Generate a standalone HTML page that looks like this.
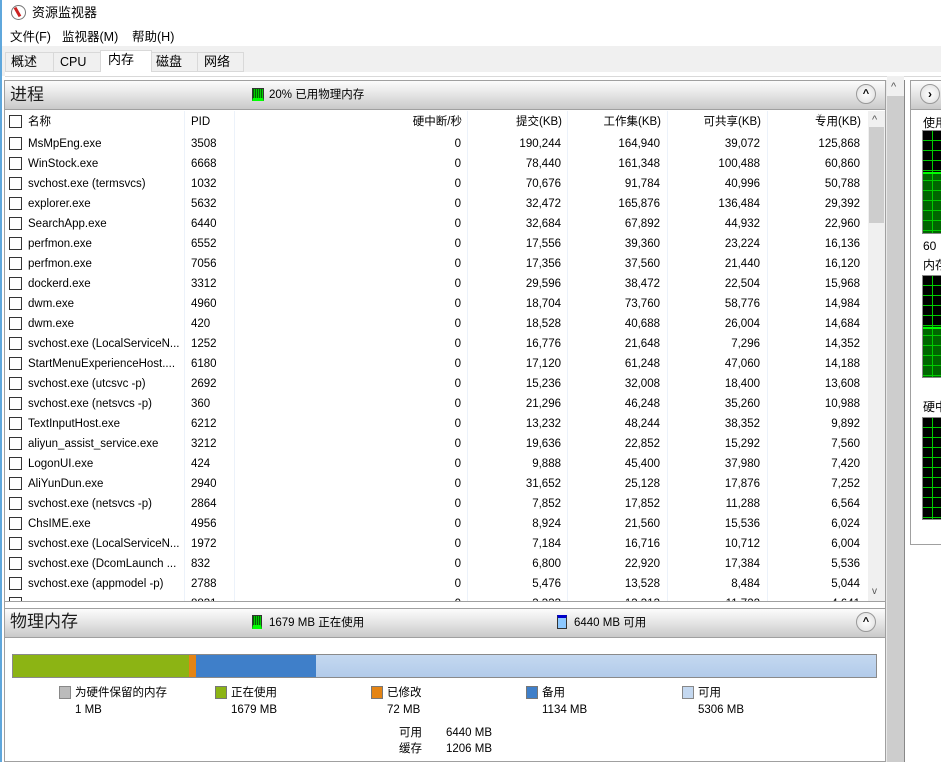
<!DOCTYPE html>
<html><head><meta charset="utf-8"><style>
*{margin:0;padding:0;box-sizing:border-box}
body{width:941px;height:762px;overflow:hidden;background:#fff;font-family:"Liberation Sans","Noto Sans CJK SC",sans-serif;font-size:12px;color:#000;position:relative}
.a{position:absolute;white-space:nowrap;line-height:14px}
.hdr{position:absolute;background:linear-gradient(#fcfcfc,#e9e9e9 40%,#c9c9c9);border:1px solid #a0a0a0}
.ht{font-size:17px;color:#1e1e1e;line-height:20px}
.cb{position:absolute;width:13px;height:13px;border:1px solid #333;background:#fff}
.btn{position:absolute;width:20px;height:20px;border-radius:50%;border:1px solid #999;background:radial-gradient(#fff,#ddd);text-align:center;font-size:11px;line-height:18px;font-weight:bold}
.r{text-align:right}
.row{position:absolute;left:5px;width:862px;height:20px;font-size:11.5px;line-height:20px}
.row span{position:absolute}
.vl{position:absolute;top:111px;height:490px;width:1px;background:#ecf2fa}
</style></head><body>
<div class="a" style="left:0;top:0;width:2px;height:762px;background:#5fa7dc"></div>
<!-- title -->
<div class="a" style="left:11px;top:5px;width:15px;height:15px;border-radius:50%;border:1.5px solid #777;background:#fff"></div>
<div class="a" style="left:16px;top:7px;width:3px;height:10px;background:#c22;transform:rotate(-30deg)"></div>
<div class="a" style="left:32px;top:5px;font-size:13px;line-height:16px">资源监视器</div>
<div class="a" style="left:10px;top:30px;font-size:12.5px">文件(F)</div>
<div class="a" style="left:62px;top:30px;font-size:12.5px">监视器(M)</div>
<div class="a" style="left:132px;top:30px;font-size:12.5px">帮助(H)</div>
<!-- tabs -->
<div class="a" style="left:2px;top:46px;width:939px;height:30px;background:#f0f0f0"></div>
<div class="a" style="left:5px;top:52px;width:239px;height:20px;border:1px solid #d9d9d9;background:#f0f0f0"></div>
<div class="a" style="left:53px;top:52px;width:1px;height:20px;background:#d9d9d9"></div>
<div class="a" style="left:151px;top:52px;width:1px;height:20px;background:#d9d9d9"></div>
<div class="a" style="left:197px;top:52px;width:1px;height:20px;background:#d9d9d9"></div>
<div class="a" style="left:100px;top:50px;width:52px;height:24px;background:#fff;border:1px solid #d9d9d9;border-bottom:none"></div>
<div class="a" style="left:11px;top:54px;font-size:13px;line-height:15px">概述</div>
<div class="a" style="left:60px;top:55px;font-size:12.5px">CPU</div>
<div class="a" style="left:108px;top:52px;font-size:13px;line-height:15px">内存</div>
<div class="a" style="left:156px;top:54px;font-size:13px;line-height:15px">磁盘</div>
<div class="a" style="left:204px;top:54px;font-size:13px;line-height:15px">网络</div>
<div class="a" style="left:5px;top:72px;width:936px;height:5px;background:#fff;border-bottom:1px solid #d9d9d9"></div>
<!-- process panel -->
<div class="a" style="left:4px;top:80px;width:882px;height:682px;border:1px solid #a0a0a0;border-top:none"></div>
<div class="hdr" style="left:4px;top:80px;width:882px;height:30px"></div>
<div class="a ht" style="left:10px;top:85px">进程</div>
<div class="a" style="left:252px;top:88px;width:12px;height:13px;background:repeating-linear-gradient(90deg,#060 0 1px,#0c0 1px 2px);border:1px solid #333;border-bottom:3px solid #0f0"></div>
<div class="a" style="left:269px;top:88px;font-size:11.5px">20% 已用物理内存</div>
<div class="btn" style="left:856px;top:84px">^</div>
<!-- column header -->
<div class="a" style="left:5px;top:111px;width:863px;height:22px;background:#fff"></div>
<div class="cb" style="left:9px;top:115px"></div>
<div class="a" style="left:28px;top:115px;font-size:11.5px">名称</div>
<div class="a" style="left:191px;top:115px;font-size:11.5px">PID</div>
<div class="a r" style="left:300px;width:162px;top:115px;font-size:11.5px">硬中断/秒</div>
<div class="a r" style="left:470px;width:92px;top:115px;font-size:11.5px">提交(KB)</div>
<div class="a r" style="left:570px;width:91px;top:115px;font-size:11.5px">工作集(KB)</div>
<div class="a r" style="left:670px;width:91px;top:115px;font-size:11.5px">可共享(KB)</div>
<div class="a r" style="left:770px;width:91px;top:115px;font-size:11.5px">专用(KB)</div>
<div class="a" style="left:816px;top:106px;font-size:9px;color:#999">⌄</div>
<div class="vl" style="left:184px"></div><div class="vl" style="left:234px"></div><div class="vl" style="left:467px"></div><div class="vl" style="left:567px"></div><div class="vl" style="left:667px"></div><div class="vl" style="left:767px"></div>
<div id="rows"></div>
<!-- inner scrollbar -->
<div class="a" style="left:868px;top:111px;width:17px;height:490px;background:#f0f0f0"></div>
<div class="a" style="left:869px;top:127px;width:15px;height:96px;background:#cdcdcd"></div>
<div class="a" style="left:872px;top:113px;font-size:11px;color:#555">^</div>
<div class="a" style="left:872px;top:585px;font-size:10px;color:#555">v</div>
<div class="a" style="left:5px;top:601px;width:880px;height:1px;background:#a0a0a0"></div>
<!-- physical memory -->
<div class="hdr" style="left:4px;top:608px;width:882px;height:30px"></div>
<div class="a ht" style="left:10px;top:612px">物理内存</div>
<div class="a" style="left:252px;top:615px;width:10px;height:14px;background:repeating-linear-gradient(90deg,#060 0 1px,#0c0 1px 2px);border:1px solid #333;border-bottom:4px solid #0f0"></div>
<div class="a" style="left:269px;top:616px;font-size:11.5px">1679 MB 正在使用</div>
<div class="a" style="left:557px;top:615px;width:10px;height:14px;background:#8cc8ff;border:1px solid #333;border-top:3px solid #00c"></div>
<div class="a" style="left:574px;top:616px;font-size:11.5px">6440 MB 可用</div>
<div class="btn" style="left:856px;top:612px">^</div>
<div class="a" style="left:12px;top:654px;width:865px;height:24px;border:1px solid #8a8a8a;background:#b6cfec;display:flex">
<div style="width:176px;background:#8cb414"></div><div style="width:7px;background:#e48414"></div><div style="width:120px;background:#3f7fc9"></div><div style="flex:1;background:linear-gradient(#c4d8f0,#b2cbea)"></div></div>
<div class="a" style="left:59px;top:686px;width:12px;height:13px;background:#bbb;border:1px solid #888"></div>
<div class="a" style="left:75px;top:686px;font-size:11.5px">为硬件保留的内存</div>
<div class="a" style="left:75px;top:703px;font-size:11.5px">1 MB</div>
<div class="a" style="left:215px;top:686px;width:12px;height:13px;background:#8cb414;border:1px solid #777"></div>
<div class="a" style="left:231px;top:686px;font-size:11.5px">正在使用</div>
<div class="a" style="left:231px;top:703px;font-size:11.5px">1679 MB</div>
<div class="a" style="left:371px;top:686px;width:12px;height:13px;background:#e48414;border:1px solid #777"></div>
<div class="a" style="left:387px;top:686px;font-size:11.5px">已修改</div>
<div class="a" style="left:387px;top:703px;font-size:11.5px">72 MB</div>
<div class="a" style="left:526px;top:686px;width:12px;height:13px;background:#3f7fc9;border:1px solid #777"></div>
<div class="a" style="left:542px;top:686px;font-size:11.5px">备用</div>
<div class="a" style="left:542px;top:703px;font-size:11.5px">1134 MB</div>
<div class="a" style="left:682px;top:686px;width:12px;height:13px;background:#c4d8f0;border:1px solid #888"></div>
<div class="a" style="left:698px;top:686px;font-size:11.5px">可用</div>
<div class="a" style="left:698px;top:703px;font-size:11.5px">5306 MB</div>
<div class="a" style="left:399px;top:726px;font-size:11.5px">可用</div>
<div class="a" style="left:446px;top:726px;font-size:11.5px">6440 MB</div>
<div class="a" style="left:399px;top:742px;font-size:11.5px">缓存</div>
<div class="a" style="left:446px;top:742px;font-size:11.5px">1206 MB</div>
<!-- outer scrollbar -->
<div class="a" style="left:887px;top:80px;width:17px;height:682px;background:#cdcdcd"></div>
<div class="a" style="left:887px;top:76px;width:17px;height:20px;background:#f0f0f0"></div>
<div class="a" style="left:891px;top:80px;font-size:11px;color:#555">^</div>
<div class="a" style="left:886px;top:80px;width:1px;height:682px;background:#e8e8e8"></div>
<div class="a" style="left:904px;top:80px;width:1px;height:682px;background:#888"></div>
<!-- right panel -->
<div class="a" style="left:910px;top:80px;width:40px;height:465px;border:1px solid #a0a0a0"></div>
<div class="hdr" style="left:910px;top:80px;width:40px;height:30px"></div>
<div class="btn" style="left:920px;top:84px;font-size:12px">›</div>
<div class="a" style="left:923px;top:116px;font-size:12px">使用</div>
<div class="a" style="left:922px;top:130px;width:30px;height:104px;border:1px solid #888;background:linear-gradient(#000 0 40%,#060 40%);"><div style="position:absolute;inset:0;background:repeating-linear-gradient(#0000 0 9px,#0c0 9px 10px),linear-gradient(90deg,#0000 0 9px,#0c0 9px 10px,#0000 10px)"></div><div style="position:absolute;left:0;right:0;top:40%;height:2px;background:#0f0"></div></div>
<div class="a" style="left:923px;top:239px;font-size:12px">60</div>
<div class="a" style="left:923px;top:258px;font-size:12px">内存</div>
<div class="a" style="left:922px;top:275px;width:30px;height:103px;border:1px solid #888;background:linear-gradient(#000 0 50%,#060 50%);"><div style="position:absolute;inset:0;background:repeating-linear-gradient(#0000 0 9px,#0c0 9px 10px),linear-gradient(90deg,#0000 0 9px,#0c0 9px 10px,#0000 10px)"></div><div style="position:absolute;left:0;right:0;top:50%;height:2px;background:#0f0"></div></div>
<div class="a" style="left:923px;top:400px;font-size:12px">硬中</div>
<div class="a" style="left:922px;top:417px;width:30px;height:103px;border:1px solid #888;background:#000"><div style="position:absolute;inset:0;background:repeating-linear-gradient(#0000 0 9px,#0c0 9px 10px),linear-gradient(90deg,#0000 0 9px,#0c0 9px 10px,#0000 10px)"></div></div>
<script>
var d=[["MsMpEng.exe",3508,"190,244","164,940","39,072","125,868"],["WinStock.exe",6668,"78,440","161,348","100,488","60,860"],["svchost.exe (termsvcs)",1032,"70,676","91,784","40,996","50,788"],["explorer.exe",5632,"32,472","165,876","136,484","29,392"],["SearchApp.exe",6440,"32,684","67,892","44,932","22,960"],["perfmon.exe",6552,"17,556","39,360","23,224","16,136"],["perfmon.exe",7056,"17,356","37,560","21,440","16,120"],["dockerd.exe",3312,"29,596","38,472","22,504","15,968"],["dwm.exe",4960,"18,704","73,760","58,776","14,984"],["dwm.exe",420,"18,528","40,688","26,004","14,684"],["svchost.exe (LocalServiceN...",1252,"16,776","21,648","7,296","14,352"],["StartMenuExperienceHost....",6180,"17,120","61,248","47,060","14,188"],["svchost.exe (utcsvc -p)",2692,"15,236","32,008","18,400","13,608"],["svchost.exe (netsvcs -p)",360,"21,296","46,248","35,260","10,988"],["TextInputHost.exe",6212,"13,232","48,244","38,352","9,892"],["aliyun_assist_service.exe",3212,"19,636","22,852","15,292","7,560"],["LogonUI.exe",424,"9,888","45,400","37,980","7,420"],["AliYunDun.exe",2940,"31,652","25,128","17,876","7,252"],["svchost.exe (netsvcs -p)",2864,"7,852","17,852","11,288","6,564"],["ChsIME.exe",4956,"8,924","21,560","15,536","6,024"],["svchost.exe (LocalServiceN...",1972,"7,184","16,716","10,712","6,004"],["svchost.exe (DcomLaunch ...",832,"6,800","22,920","17,384","5,536"],["svchost.exe (appmodel -p)",2788,"5,476","13,528","8,484","5,044"],["",8831,"3,333","13,313","11,722","4,641"]];
var h="";d.forEach(function(r,i){var t=134+i*20;var clip=i==23?"clip-path:inset(0 0 13px 0);":"";h+='<div class="row" style="top:'+t+'px;'+clip+'"><span class="cb" style="left:4px;top:3px"></span><span style="left:23px">'+r[0]+'</span><span style="left:186px">'+r[1]+'</span><span style="right:406px">0</span><span style="right:306px">'+r[2]+'</span><span style="right:207px">'+r[3]+'</span><span style="right:107px">'+r[4]+'</span><span style="right:7px">'+r[5]+'</span></div>';});
document.getElementById("rows").innerHTML=h;
</script>
</body></html>
